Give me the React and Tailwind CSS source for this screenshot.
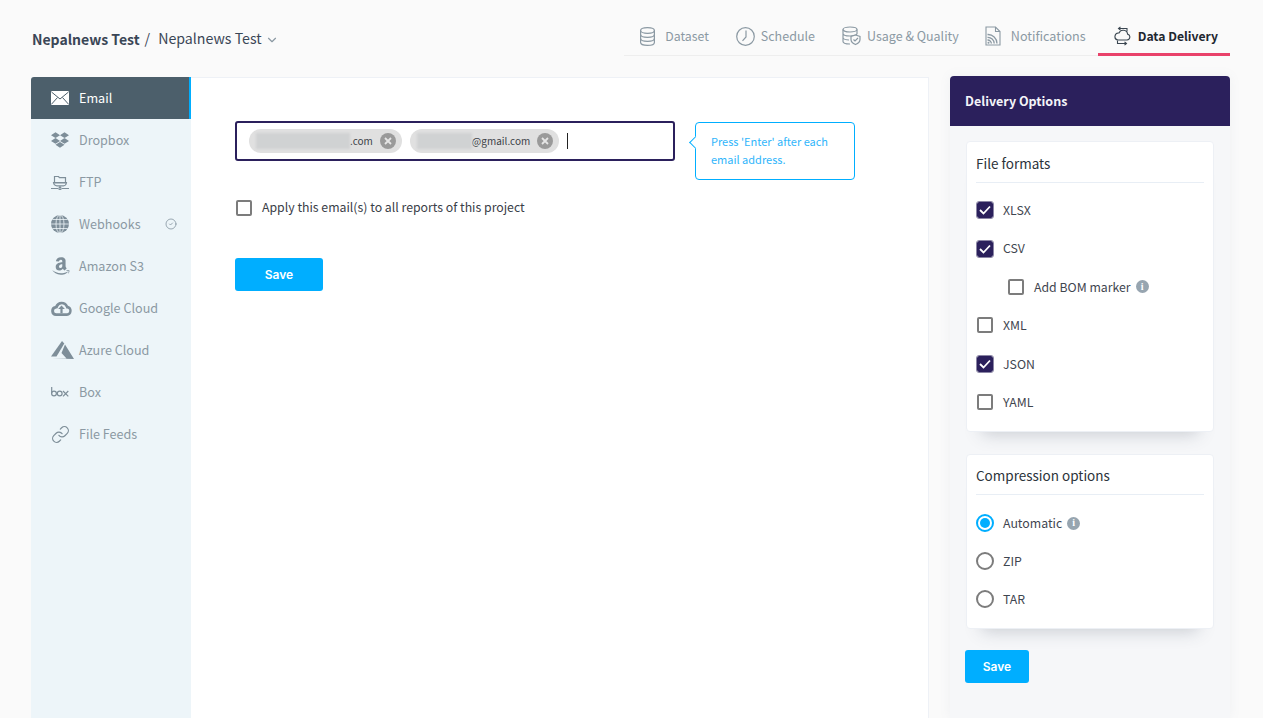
import React from "react";
import { ChevronDown, Link as LinkIcon, CircleCheck } from "lucide-react";
import { FaDropbox, FaAmazon } from "react-icons/fa";

const stroke = "#8b99a3";

const DatasetIcon = () => (
  <svg width="15" height="19" viewBox="0 0 15 19" fill="none" stroke={stroke} strokeWidth="1.200">
    <path d="M.6 3.500C.6 1.800 3.500.6 7.500.6s6.900 1.200 6.900 2.900v12c0 1.700-2.900 2.900-6.900 2.900S.6 17.200.6 15.500z" />
    <path d="M.6 3.500c0 1.600 2.900 2.800 6.900 2.800s6.900-1.200 6.900-2.800M.6 7.500c0 1.600 2.900 2.800 6.900 2.800s6.900-1.200 6.900-2.800M.6 11.500c0 1.600 2.900 2.800 6.900 2.800s6.900-1.200 6.900-2.800" />
  </svg>
);
const ClockIcon = () => (
  <svg width="19" height="19" viewBox="0 0 19 19" fill="none" stroke={stroke} strokeWidth="1.200">
    <circle cx="9.500" cy="9.500" r="8.800" />
    <path d="M10 3.500V10l-3.500 3.800" />
  </svg>
);
const UsageIcon = () => (
  <svg width="19" height="20" viewBox="0 0 19 20" fill="none" stroke={stroke} strokeWidth="1.200">
    <ellipse cx="8" cy="3.500" rx="7" ry="2.500" />
    <path d="M1 3.500v12c0 1.400 3 2.500 7 2.500M15 3.500V8M1 7.500c0 1.400 3 2.500 7 2.500s7-1.100 7-2.500M1 11.500c0 1.400 3 2.500 6 2.500" />
    <path d="M13.500 9l4.500 1.500v3c0 2.500-2 4-4.500 5-2.500-1-4.500-2.500-4.500-5v-3z" fill="#fafafa" />
    <path d="M11.500 13.500l1.500 1.500 3-3" />
  </svg>
);
const NotifIcon = () => (
  <svg width="16" height="20" viewBox="0 0 16 20" fill="none" stroke={stroke} strokeWidth="1.100">
    <path d="M1 1h9.500L15 5.500V19H1z" />
    <path d="M10.500 1v4.500H15" />
    <path d="M2.500 8.500a9 9 0 0 1 9.500 9M2.500 11.300a6.300 6.300 0 0 1 6.700 6.200M2.500 14a3.600 3.600 0 0 1 3.900 3.500" strokeWidth="1.300" />
    <circle cx="3.500" cy="16.800" r="1" fill={stroke} stroke="none" />
  </svg>
);
const DeliveryIcon = () => (
  <svg width="17" height="20" viewBox="0 0 17 20" fill="none" stroke="#3a4650" strokeWidth="1.100">
    <path d="M4 14h9a3 3 0 0 0 .6-5.900A4.500 4.500 0 0 0 5 7 3.500 3.500 0 0 0 4 14z" />
    <path d="M13 5.500V2.500H4.500M6.500.8L4.500 2.500l2 1.700" />
    <path d="M3.500 14.500v3H12.500M10.500 15.800l2 1.700-2 1.700" />
  </svg>
);
const MailIcon = () => (
  <svg width="18" height="14" viewBox="0 0 18 14">
    <rect width="18" height="14" rx="1" fill="#fff" />
    <path d="M0.500 1L9 8l8.500-7M0.500 13.200L6.500 6.500M17.500 13.200L11.500 6.500" fill="none" stroke="#4c5f6b" strokeWidth="1" />
  </svg>
);
const FtpIcon = () => (
  <svg width="18" height="15" viewBox="0 0 18 15" fill="none" stroke="#7e8e99" strokeWidth="1.200">
    <path d="M3.500 8V1.500h4l1 1.200h6V8z" />
    <path d="M2.500 7.500h13c-.3 2-1.300 3.300-3 3.300H6c-1.700 0-3.200-1.300-3.500-3.300z" />
    <path d="M9 11v1.500M0 13.500h7M11 13.500h7" />
    <circle cx="9" cy="13.500" r="1.100" />
  </svg>
);
const GlobeIcon = () => (
  <svg width="18" height="18" viewBox="0 0 18 18">
    <circle cx="9" cy="9" r="9" fill="#7e8e99" />
    <g fill="none" stroke="#edf5f9" strokeWidth="0.800">
      <ellipse cx="9" cy="9" rx="4" ry="9" />
      <path d="M9 0v18M0 9h18M1.500 4.500h15M1.500 13.500h15" />
    </g>
  </svg>
);
const GCloudIcon = () => (
  <svg width="21" height="16" viewBox="0 0 21 16">
    <path d="M5 16a5 5 0 0 1-.8-9.900A7 7 0 0 1 17 5.700 5.300 5.300 0 0 1 16 16z" fill="#7e8e99" />
    <path d="M5.500 13.300a2.400 2.400 0 0 1-.2-4.800l1.300-.2.400-1.200a4.200 4.200 0 0 1 7.800-.2l.5 1.500h1a2.500 2.500 0 0 1 0 4.900z" fill="#edf5f9" />
    <path d="M10.500 5.500l3.400 3.600h-2.300v4.200H9.400V9.100H7.100z" fill="#7e8e99" />
  </svg>
);
const AzureIcon = () => (
  <svg width="23" height="18" viewBox="0 0 23 18" fill="#7e8e99">
    <path d="M11 0L0 15.500h5.500L13.300 2.500z" />
    <path d="M14 3.500L10.500 12l5 5.500H1L23 18z" />
  </svg>
);
const BoxIcon = () => (
  <svg width="18" height="10" viewBox="0 0 18 10" fill="none" stroke="#7e8e99" strokeWidth="1.200">
    <path d="M0.700 0v6.400" />
    <circle cx="3" cy="6.500" r="2.400" />
    <circle cx="8.700" cy="6.500" r="2.400" />
    <path d="M12 4l5.300 5.300M17.300 4L12 9.300" />
  </svg>
);
const Info = () => (
  <span className="ml-[5px] inline-flex h-[13px] w-[13px] items-center justify-center rounded-full bg-[#97a5b0] font-['Liberation_Serif',serif] text-[10px] font-bold leading-none text-white">
    i
  </span>
);

const tabs = [
  { label: "Dataset", icon: <DatasetIcon />, cls: "pl-[16px] text-[12.300px]", w: "w-[25px]" },
  { label: "Schedule", icon: <ClockIcon />, cls: "pl-[15px] text-[12.500px]", w: "w-[25px]" },
  { label: "Usage & Quality", icon: <UsageIcon />, cls: "pl-[15px] text-[12.500px]", w: "w-[25px]" },
  { label: "Notifications", icon: <NotifIcon />, cls: "pl-[14px] text-[12.600px]", w: "w-[26px]" },
];

const side = [
  { label: "Dropbox", icon: <FaDropbox size={18} color="#7e8e99" /> },
  { label: "FTP", icon: <FtpIcon /> },
  { label: "Webhooks", icon: <GlobeIcon />, check: true },
  { label: "Amazon S3", icon: <FaAmazon size={20} color="#7e8e99" /> },
  { label: "Google Cloud", icon: <GCloudIcon /> },
  { label: "Azure Cloud", icon: <AzureIcon /> },
  { label: "Box", icon: <BoxIcon /> },
  { label: "File Feeds", icon: <LinkIcon size={19} color="#7e8e99" strokeWidth={1.5} /> },
];

const Box = ({ checked }) =>
  checked ? (
    <span className="flex h-[16px] w-[16px] shrink-0 items-center justify-center rounded-[2px] bg-[#2b205c] outline outline-1 outline-[#8b86a5]">
      <svg width="12" height="10" viewBox="0 0 12 10" fill="none" stroke="#fff" strokeWidth="1.800">
        <path d="M1 5l3.500 3.500L11 1.500" />
      </svg>
    </span>
  ) : (
    <span className="block h-[16px] w-[16px] shrink-0 rounded-[2px] border-2 border-[#7c7c7c] bg-white" />
  );

const Radio = ({ on }) =>
  on ? (
    <span className="flex h-[18px] w-[18px] shrink-0 items-center justify-center rounded-full border-2 border-[#00aeff]">
      <span className="block h-[10px] w-[10px] rounded-full bg-[#00aeff]" />
    </span>
  ) : (
    <span className="block h-[18px] w-[18px] shrink-0 rounded-full border-2 border-[#7c7c7c]" />
  );

const Chip = ({ suffix, w }) => (
  <div className="flex h-[24px] items-center rounded-full bg-[#e0e0e0] pl-[7px] pr-[6px]">
    <span className={`h-[16px] bg-[#d0d2d3] blur-[1px] ${w}`} />
    <span className="text-[10px] leading-none text-[#3c4248]">{suffix}</span>
    <span className="ml-[7px] flex h-[16px] w-[16px] items-center justify-center rounded-full bg-[#9a9a9a]">
      <svg width="8" height="8" viewBox="0 0 8 8" stroke="#e6e6e6" strokeWidth="1.800">
        <path d="M1 1l6 6M7 1L1 7" />
      </svg>
    </span>
  </div>
);

const FileRow = ({ label, checked, nested, info }) => (
  <div className={`flex h-[38.400px] items-center ${nested ? "pl-[32px]" : "pl-[1px]"}`}>
    <Box checked={checked} />
    <span className="ml-[10px] text-[12.300px] text-[#3f4650]">{label}</span>
    {info && <Info />}
  </div>
);

const RadioRow = ({ label, on, info }) => (
  <div className="flex h-[38px] items-center">
    <Radio on={on} />
    <span className="ml-[9px] text-[12.300px] text-[#3f4650]">{label}</span>
    {info && <Info />}
  </div>
);

export default function App() {
  return (
    <div className="h-[718px] overflow-hidden bg-[#fafafa] pl-[31px] pr-[33px] font-['Noto_Sans_CJK_SC','Noto_Sans',sans-serif]">
      <header className="flex h-[76px] justify-between">
        <div className="flex items-center pl-[1px] pt-[2px] text-[14.200px] text-[#3a4656]">
          <span className="text-[14px] font-semibold">Nepalnews Test</span>
          <span className="ml-[5px] mr-[8px]">/</span>
          <span>Nepalnews Test</span>
          <ChevronDown size={14} color="#8b99a3" className="ml-[3px] mt-[2px]" />
        </div>
        <nav className="mt-[20px] flex h-[36px] items-stretch">
          <div className="flex border-b border-[#eeeeee]">
            {tabs.map((t) => (
              <div key={t.label} className={`flex items-center pb-[3px] pr-[12px] text-[#8b99a3] ${t.cls}`}>
                <span className={`flex justify-start ${t.w}`}>{t.icon}</span>
                {t.label}
              </div>
            ))}
          </div>
          <div className="flex items-center border-b-[3px] border-[#e9426a] pb-[1px] pl-[16px] pr-[12px] text-[12.200px] font-semibold text-[#1f2730]">
            <span className="flex w-[24px] justify-start"><DeliveryIcon /></span>
            Data Delivery
          </div>
        </nav>
      </header>

      <div className="flex h-[642px] items-start">
        <aside className="mt-[1px] h-full w-[160px] shrink-0 overflow-hidden rounded-tl-[3px] bg-[#edf5f9] text-[12.600px] text-[#8b99a3]">
          <div className="flex h-[42px] items-center border-r-2 border-[#00aeff] bg-[#4c5f6b] pl-[20px] text-white">
            <span className="flex w-[28px] justify-start"><MailIcon /></span>
            Email
          </div>
          {side.map((s) => (
            <div key={s.label} className="flex h-[42px] items-center pl-[20px] pr-[14px]">
              <span className="flex w-[28px] justify-start">{s.icon}</span>
              {s.label}
              {s.check && <CircleCheck size={12} color="#7e8e99" strokeWidth={1.5} className="ml-auto" />}
            </div>
          ))}
        </aside>

        <main className="mt-[1px] h-full w-[738px] shrink-0 border-r border-t border-[#eef1f6] bg-white pl-[44px] pt-[43px]">
          <div className="flex items-start">
            <div className="flex h-[40px] w-[440px] items-center gap-[8px] rounded-[3px] border-2 border-[#2b205c] pl-[12px]">
              <Chip w="w-[94px]" suffix=".com" />
              <Chip w="w-[55px]" suffix="@gmail.com" />
              <span className="block h-[16px] w-px bg-[#222]" />
            </div>
            <div className="relative ml-[20px] mt-[1px] h-[58px] w-[160px] rounded-[4px] border border-[#00aeff] pl-[15px] pt-[9px] text-[11px] leading-[18px] text-[#2fb5fb]">
              <span className="absolute left-[-5px] top-[15px] h-[9px] w-[9px] rotate-45 border-b border-l border-[#00aeff] bg-white" />
              Press 'Enter' after each
              <br />
              email address.
            </div>
          </div>
          <div className="mt-[18px] flex h-[20px] items-center pl-px">
            <Box />
            <span className="-mt-px ml-[10px] text-[12.300px] text-[#3a4048]">Apply this email(s) to all reports of this project</span>
          </div>
          <button className="mt-[40px] block h-[33px] w-[88px] rounded-[3px] bg-[#00aeff] font-['Inter',sans-serif] text-[12px] font-semibold text-white">
            Save
          </button>
        </main>

        <aside className="ml-[21px] h-full w-[280px] shrink-0 overflow-hidden rounded-t-[4px] bg-[#f6f7f9] shadow-[0_0_12px_rgba(120,130,150,0.08)]">
          <div className="flex h-[50px] items-center bg-[#2b205c] pl-[15px] text-[12.500px] font-bold text-[#f4f4f8]">Delivery Options</div>
          <section className="mx-[16px] mt-[15px] h-[291px] rounded-[4px] border border-[#edf0f5] bg-white px-[9px] shadow-[0_18px_16px_-16px_rgba(60,70,90,0.25)]">
            <div className="flex h-[41px] items-center border-b border-[#e8eef5] pt-[3px] text-[13.500px] text-[#2c333a]">File formats</div>
            <div className="pt-[8px]">
              <FileRow label="XLSX" checked />
              <FileRow label="CSV" checked />
              <FileRow label="Add BOM marker" nested info />
              <FileRow label="XML" />
              <FileRow label="JSON" checked />
              <FileRow label="YAML" />
            </div>
          </section>
          <section className="mx-[16px] mt-[22px] h-[175px] rounded-[4px] border border-[#edf0f5] bg-white px-[9px] shadow-[0_18px_16px_-16px_rgba(60,70,90,0.25)]">
            <div className="flex h-[40px] items-center border-b border-[#e8eef5] pt-[2px] text-[13.500px] text-[#2c333a]">Compression options</div>
            <div className="pt-[9px]">
              <RadioRow label="Automatic" on info />
              <RadioRow label="ZIP" />
              <RadioRow label="TAR" />
            </div>
          </section>
          <button className="ml-[15px] mt-[21px] block h-[33px] w-[64px] rounded-[3px] bg-[#00aeff] font-['Inter',sans-serif] text-[12px] font-semibold text-white">
            Save
          </button>
        </aside>
      </div>
    </div>
  );
}
